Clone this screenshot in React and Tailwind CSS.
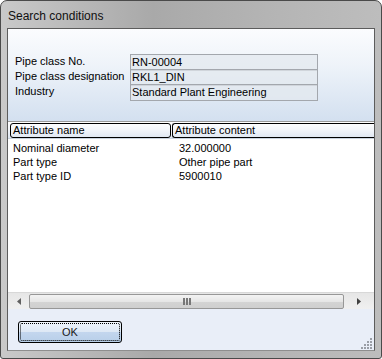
import React from 'react';

const fields = [
  { label: 'Pipe class No.', value: 'RN-00004' },
  { label: 'Pipe class designation', value: 'RKL1_DIN' },
  { label: 'Industry', value: 'Standard Plant Engineering' },
];

const rows = [
  { name: 'Nominal diameter', content: '32.000000' },
  { name: 'Part type', content: 'Other pipe part' },
  { name: 'Part type ID', content: '5900010' },
];

const font = { fontFamily: 'Tahoma, "Liberation Sans", Arial, sans-serif' };

const SearchConditions = () => {
  return (
    <div
      className="w-[382px] h-[359px] flex flex-col rounded-t-[7px] rounded-b-[3px] border border-[#4a4a4a] bg-[linear-gradient(90deg,#c9c9c9_0%,#a9a9a9_40%,#b4b4b4_70%,#bdbdbd_100%)] overflow-hidden text-[11px] text-black whitespace-nowrap"
      style={font}
    >
      {/* title bar */}
      <div className="h-[27px] shrink-0 flex items-center pl-[7px]">
        <span className="text-[12px] text-[#101010] pt-[2px]">Search conditions</span>
      </div>

      {/* client */}
      <div className="mx-[6px] h-[323px] flex flex-col border border-[#5c5c5c] border-b-[#8e8e8e] bg-white">
        {/* upper panel */}
        <div className="h-[92px] shrink-0 bg-[linear-gradient(180deg,#fbfcfe_0%,#eef3f9_40%,#d3e0f0_100%)] pt-[25px] pl-[7px]">
          {fields.map((f) => (
            <div key={f.label} className="flex h-[16px] -mb-px">
              <div className="w-[115px] leading-[14px]">{f.label}</div>
              <div className="w-[188px] h-[17px] border border-[#a3a7ad] bg-[#e3e8ee]/70 pl-[1px] leading-[14px]">
                {f.value}
              </div>
            </div>
          ))}
        </div>

        {/* list */}
        <div className="h-[171px] shrink-0 border-t border-[#9a9a9a] bg-white flex flex-col">
          <div className="h-[17px] flex items-center gap-[1px] pl-[2px] bg-[linear-gradient(180deg,#ffffff_0%,#f2f5fa_50%,#dde6f2_100%)] border-b border-[#c9d3df]">
            <div className="w-[161px] h-[15px] border border-black rounded-[3px] pl-[2px] leading-[13px]">Attribute name</div>
            <div className="flex-1 h-[15px] border border-black border-r-0 rounded-l-[3px] pl-[2px] leading-[13px]">Attribute content</div>
          </div>
          <div className="pt-[2px]">
            {rows.map((r) => (
              <div key={r.name} className="flex h-[14px] leading-[14px]">
                <div className="w-[171px] pl-[5px]">{r.name}</div>
                <div>{r.content}</div>
              </div>
            ))}
          </div>
        </div>

        {/* horizontal scrollbar */}
        <div className="h-[17px] shrink-0 flex items-center bg-[linear-gradient(180deg,#e6e6e6_0%,#f0f0f0_100%)] border-t border-[#d8d8d8]">
          <div className="w-[21px] flex justify-center">
            <svg width="4" height="7" viewBox="0 0 4 7"><path d="M4 0 L0 3.5 L4 7 Z" fill="#606060" /></svg>
          </div>
          <div className="w-[315px] h-[15px] rounded-[2px] border border-[#979797] bg-[linear-gradient(180deg,#f3f3f3_0%,#e6e6e6_50%,#d4d4d4_51%,#cfcfcf_100%)] flex items-center justify-center">
            <svg width="8" height="7" viewBox="0 0 8 7">
              <rect x="0" y="0" width="2" height="7" fill="#777" />
              <rect x="3" y="0" width="2" height="7" fill="#777" />
              <rect x="6" y="0" width="2" height="7" fill="#777" />
            </svg>
          </div>
          <div className="flex-1 flex justify-center">
            <svg width="4" height="7" viewBox="0 0 4 7"><path d="M0 0 L4 3.5 L0 7 Z" fill="#404040" /></svg>
          </div>
        </div>

        {/* bottom panel */}
        <div className="flex-1 bg-[#e9eef8] relative pt-[12px] pl-[10px]">
          <button
            type="button"
            className="w-[104px] h-[22px] rounded-[3px] border border-black p-[1px] bg-[linear-gradient(180deg,#eef4fb_0%,#dde8f5_50%,#c3d6ee_51%,#b8cfe9_100%)]"
          >
            <div className="w-full h-full rounded-[2px] border border-dotted border-black flex items-center justify-center leading-none text-[#1a1a1a]">
              OK
            </div>
          </button>
          <div className="absolute right-[2px] bottom-[1px] grid grid-cols-4 gap-[1px]">
            {[0, 0, 0, 1, 0, 0, 1, 1, 0, 1, 1, 1, 1, 1, 1, 1].map((d, i) => (
              <div key={i} className={d ? 'w-[2px] h-[2px] bg-[#9a9ea6]' : 'w-[2px] h-[2px]'} />
            ))}
          </div>
        </div>
      </div>
    </div>
  );
};

export default SearchConditions;
